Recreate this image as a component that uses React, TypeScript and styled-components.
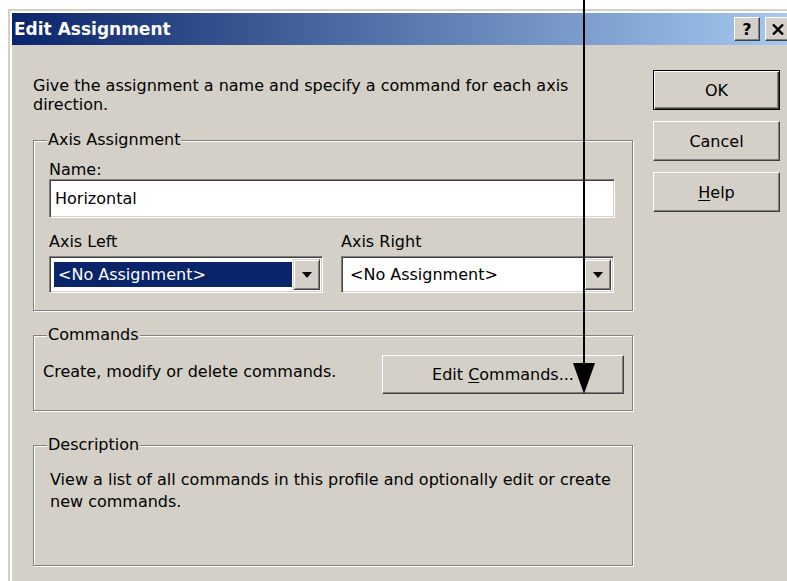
import styled, { createGlobalStyle } from "styled-components";

const GlobalStyle = createGlobalStyle`
  html, body {
    margin: 0;
    padding: 0;
    background: #ffffff;
    overflow: hidden;
  }
  body {
    font-family: "DejaVu Sans", "Liberation Sans", sans-serif;
    font-size: 16px;
    color: #000000;
  }
`;

type AxisProps = {
  label: string;
  value: string;
  selected?: boolean;
};

const AxisSelect = ({ label, value, selected }: AxisProps) => {
  return (
    <div>
      <FieldLabel $gap={5}>{label}</FieldLabel>
      <Combo>
        <ComboValue $selected={selected}>{value}</ComboValue>
        <DropButton>
          <svg width="10" height="6" viewBox="0 0 10 6">
            <polygon points="0,0 10,0 5,6" fill="#000" />
          </svg>
        </DropButton>
      </Combo>
    </div>
  );
};

export default function App() {
  return (
    <Page>
      <GlobalStyle />
      <Window>
        <TitleBar>
          <Title>Edit Assignment</Title>
          <TitleButtons>
            <CaptionButton>?</CaptionButton>
            <CaptionButton>
              <svg width="12" height="11" viewBox="0 0 12 11">
                <path d="M1 0.5 L11 10.5 M11 0.5 L1 10.5" stroke="#000" strokeWidth="2.4" />
              </svg>
            </CaptionButton>
          </TitleButtons>
        </TitleBar>

        <Body>
          <MainColumn>
            <Intro>
              Give the assignment a name and specify a command for each axis
              <br />
              direction.
            </Intro>

            <Group $top={16}>
              <Legend>Axis Assignment</Legend>
              <GroupInner $pad="10px 17px 17px 15px">
                <FieldLabel $gap={0}>Name:</FieldLabel>
                <TextInput>Horizontal</TextInput>
                <AxisRow>
                  <AxisSelect label="Axis Left" value="<No Assignment>" selected />
                  <AxisSelect label="Axis Right" value="<No Assignment>" />
                </AxisRow>
              </GroupInner>
            </Group>

            <Group $top={14}>
              <Legend>Commands</Legend>
              <GroupInner $pad="10px 8px 16px 9px">
                <CommandsRow>
                  <CommandsText>Create, modify or delete commands.</CommandsText>
                  <PushButton $width={242} $height={39}>
                    <span>
                      Edit <u>C</u>ommands...
                    </span>
                  </PushButton>
                </CommandsRow>
              </GroupInner>
            </Group>

            <Group $top={24}>
              <Legend>Description</Legend>
              <GroupInner $pad="14px 10px 0 16px" $height={110}>
                <Description>
                  View a list of all commands in this profile and optionally edit or create
                  <br />
                  new commands.
                </Description>
              </GroupInner>
            </Group>
          </MainColumn>

          <SideColumn>
            <PushButton $width={127} $height={40} $default>
              OK
            </PushButton>
            <PushButton $width={127} $height={40}>
              Cancel
            </PushButton>
            <PushButton $width={127} $height={40}>
              <span>
                <u>H</u>elp
              </span>
            </PushButton>
          </SideColumn>
        </Body>
      </Window>

      {/* pointer drawn over the dialog */}
      <Pointer width="787" height="581" viewBox="0 0 787 581">
        <line x1="584" y1="0" x2="584" y2="368" stroke="#000" strokeWidth="2" />
        <polygon points="573,363 595,363 584,394" fill="#000" />
      </Pointer>
    </Page>
  );
}

//style
const Page = styled.div`
  position: relative;
  width: 787px;
  height: 581px;
  overflow: hidden;
  padding: 9px 0 0 8px;
  box-sizing: border-box;
`;

const Window = styled.div`
  width: 789px;
  height: 620px;
  box-sizing: border-box;
  background: #d4d0c8;
  border: 2px solid;
  border-color: #d4d0c8 #404040 #404040 #d4d0c8;
  box-shadow: inset 2px 2px 0 #ffffff, inset -2px -2px 0 #808080;
  padding: 2px;
  display: flex;
  flex-direction: column;
`;

const TitleBar = styled.div`
  height: 32px;
  flex-shrink: 0;
  display: flex;
  align-items: center;
  justify-content: space-between;
  padding: 0 2px;
  background: linear-gradient(to right, #0a246a, #a6caf0);
`;

const Title = styled.span`
  font-family: "DejaVu Sans", sans-serif;
  font-weight: bold;
  font-size: 17px;
  color: #ffffff;
`;

const TitleButtons = styled.div`
  display: flex;
  gap: 5px;
`;

const CaptionButton = styled.div`
  width: 26px;
  height: 24px;
  box-sizing: border-box;
  display: flex;
  align-items: center;
  justify-content: center;
  background: #d4d0c8;
  border: 1px solid;
  border-color: #ffffff #404040 #404040 #ffffff;
  box-shadow: inset -1px -1px 0 #808080;
  font-family: "DejaVu Sans", sans-serif;
  font-weight: bold;
  font-size: 16px;
`;

const Body = styled.div`
  display: flex;
  gap: 20px;
  padding: 25px 0 0 21px;
`;

const MainColumn = styled.div`
  width: 600px;
  display: flex;
  flex-direction: column;
`;

const SideColumn = styled.div`
  display: flex;
  flex-direction: column;
  gap: 11px;
`;

const Intro = styled.p`
  margin: 6px 0 0;
  line-height: 19px;
`;

const Group = styled.fieldset<{ $top: number }>`
  margin: ${(p) => p.$top}px 0 0;
  padding: 0;
  min-width: 0;
  border: 1px solid #808080;
  box-shadow: 1px 1px 0 #ffffff, inset 1px 1px 0 #ffffff;
`;

const Legend = styled.legend`
  margin-left: 13px;
  padding: 0 1px;
  line-height: 20px;
  background: #d4d0c8;
`;

const GroupInner = styled.div<{ $pad: string; $height?: number }>`
  padding: ${(p) => p.$pad};
  ${(p) => (p.$height ? `height: ${p.$height}px; box-sizing: border-box;` : "")}
`;

const FieldLabel = styled.div<{ $gap: number }>`
  line-height: 19px;
  margin-bottom: ${(p) => p.$gap}px;
`;

const sunken = `
  border: 1px solid;
  border-color: #808080 #ffffff #ffffff #808080;
  box-shadow: inset 1px 1px 0 #404040, inset -1px -1px 0 #d4d0c8;
  background: #ffffff;
  box-sizing: border-box;
`;

const TextInput = styled.div`
  ${sunken}
  width: 566px;
  height: 39px;
  padding: 0 5px;
  display: flex;
  align-items: center;
`;

const AxisRow = styled.div`
  display: grid;
  grid-template-columns: 274px 273px;
  column-gap: 18px;
  margin-top: 14px;
`;

const Combo = styled.div`
  ${sunken}
  height: 37px;
  padding: 2px;
  display: flex;
  align-items: stretch;
`;

const ComboValue = styled.div<{ $selected?: boolean }>`
  flex: 1;
  margin: 3px 1px 3px 2px;
  padding: 0 4px;
  display: flex;
  align-items: center;
  white-space: nowrap;
  background: ${(p) => (p.$selected ? "#0a246a" : "#ffffff")};
  color: ${(p) => (p.$selected ? "#ffffff" : "#000000")};
`;

const DropButton = styled.div`
  width: 27px;
  box-sizing: border-box;
  display: flex;
  align-items: center;
  justify-content: center;
  background: #d4d0c8;
  border: 1px solid;
  border-color: #d4d0c8 #404040 #404040 #d4d0c8;
  box-shadow: inset 1px 1px 0 #ffffff, inset -1px -1px 0 #808080;
`;

const CommandsRow = styled.div`
  display: flex;
  justify-content: space-between;
  align-items: flex-start;
`;

const CommandsText = styled.div`
  margin-top: 7px;
  line-height: 20px;
`;

const Description = styled.p`
  margin: 0;
  line-height: 22px;
`;

const PushButton = styled.div<{ $width: number; $height: number; $default?: boolean }>`
  width: ${(p) => p.$width}px;
  height: ${(p) => p.$height}px;
  box-sizing: border-box;
  display: flex;
  align-items: center;
  justify-content: center;
  background: #d4d0c8;
  border: 1px solid;
  border-color: ${(p) => (p.$default ? "#000000" : "#ffffff #404040 #404040 #ffffff")};
  box-shadow: ${(p) =>
    p.$default
      ? "inset 1px 1px 0 #ffffff, inset -1px -1px 0 #404040, inset -2px -2px 0 #808080"
      : "inset -1px -1px 0 #808080"};
  u {
    text-decoration-thickness: 1px;
    text-underline-offset: 2px;
  }
`;

const Pointer = styled.svg`
  position: absolute;
  left: 0;
  top: 0;
  pointer-events: none;
`;
